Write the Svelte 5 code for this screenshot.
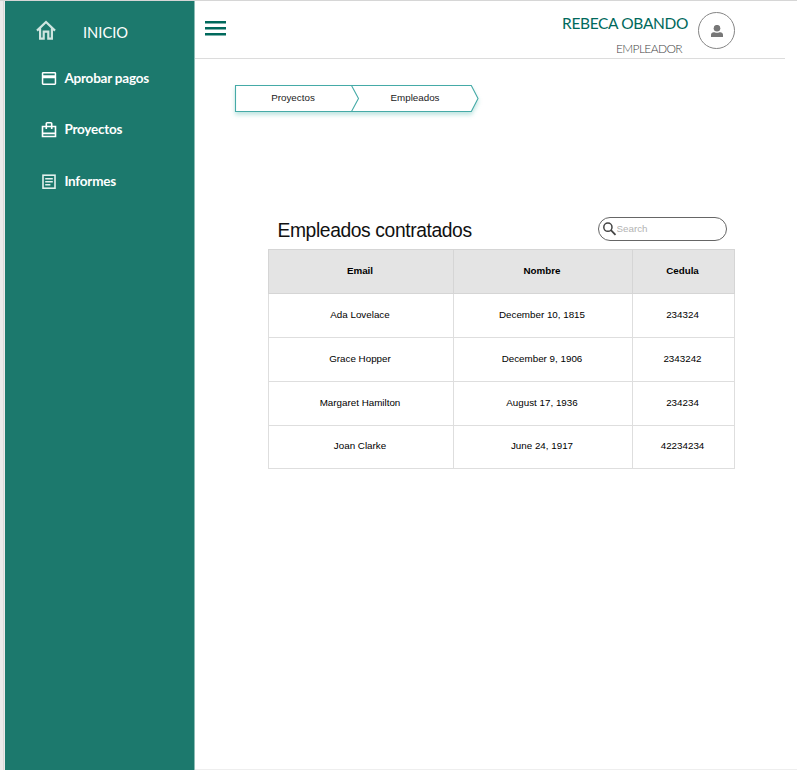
<script>
  const rows = [
    ['Ada Lovelace', 'December 10, 1815', '234324'],
    ['Grace Hopper', 'December 9, 1906', '2343242'],
    ['Margaret Hamilton', 'August 17, 1936', '234234'],
    ['Joan Clarke', 'June 24, 1917', '42234234'],
  ];
</script>

<div class="page">
  <aside>
    <a class="home" href="#inicio">
      <svg width="20" height="20" viewBox="0 0 20 20" fill="none" stroke="#cfe5e0" stroke-width="2.2">
        <path d="M1 10.6 10 2l9 8.6M4.100 8.500V18.600H7.700V11.600H12.300V18.600H15.900V8.500" />
      </svg>
      <span>INICIO</span>
    </a>
    <nav>
      <a href="#pagos">
        <svg width="16" height="16" viewBox="0 0 16 16">
          <path fill="#fff" fill-rule="evenodd" d="M2.200 2h11.600c.8 0 1.400.6 1.400 1.400v10.200c0 .8-.6 1.400-1.400 1.400H2.200c-.8 0-1.400-.6-1.400-1.400V3.400c0-.8.6-1.400 1.400-1.400ZM2.300 3.500v1.700h11.400V3.500ZM2.300 8.200v5.300h11.400V8.200Z" />
        </svg>
        <span>Aprobar pagos</span>
      </a>
      <a href="#proyectos">
        <svg width="16" height="16" viewBox="0 0 16 16" fill="none" stroke="#fff" stroke-width="1.600">
          <path d="M1.500 4.500h13v10h-13ZM5.300 7V1.500Q5.300.8 6.100.8H9.900Q10.700.8 10.700 1.500V7M1.500 11.400h13" />
        </svg>
        <span>Proyectos</span>
      </a>
      <a href="#informes">
        <svg width="16" height="16" viewBox="0 0 16 16" fill="none" stroke="#e2f0ed" stroke-width="1.600">
          <rect x="2" y="2.200" width="12" height="13" />
          <path d="M4.200 5.700h7.600M4.200 8.700h7.600M4.200 11.700h5.200" />
        </svg>
        <span>Informes</span>
      </a>
    </nav>
  </aside>

  <div class="body">
    <header>
      <button class="menu" aria-label="Menu">
        <svg width="21" height="16" viewBox="0 0 21 16" fill="#00695c">
          <path d="M0 0h21v2.500H0ZM0 6h21v2.500H0ZM0 12h21v2.500H0Z" />
        </svg>
      </button>
      <div class="user">
        <div class="name">REBECA OBANDO</div>
        <div class="role">EMPLEADOR</div>
      </div>
      <div class="avatar">
        <svg width="12" height="12" viewBox="0 0 12 12" fill="#777">
          <circle cx="6" cy="3.200" r="3.300" />
          <path d="M0 12v-2.300C0 8.200 1.200 7.200 2.700 7.200c1 0 1.700.5 3.300.5s2.300-.5 3.300-.5C10.800 7.200 12 8.200 12 9.700V12Z" />
        </svg>
      </div>
    </header>

    <main>
      <div class="crumbs">
        <svg width="250" height="36" viewBox="0 0 250 36" fill="#fff" stroke="#45aaa7" stroke-width="1.100">
          <path d="M3.500 3.500H239.300L246 16.500 239.300 29.500H3.500Z" />
          <path fill="none" d="M119.500 3.500 126.500 16.500 119.500 29.500" />
        </svg>
        <span>Proyectos</span>
        <span>Empleados</span>
      </div>

      <section>
        <div class="top">
          <h1>Empleados contratados</h1>
          <label class="search">
            <svg width="14" height="14" viewBox="0 0 14 14" fill="none" stroke="#444">
              <circle cx="4.900" cy="5.200" r="4.100" stroke-width="1.500" />
              <path d="m7.900 8.200 4.600 4.600" stroke-width="1.800" />
            </svg>
            <input type="text" placeholder="Search" />
          </label>
        </div>
        <table>
          <colgroup><col class="c1" /><col class="c2" /><col class="c3" /></colgroup>
          <thead>
            <tr><th>Email</th><th>Nombre</th><th>Cedula</th></tr>
          </thead>
          <tbody>
            {#each rows as row}
              <tr>{#each row as cell}<td>{cell}</td>{/each}</tr>
            {/each}
          </tbody>
        </table>
      </section>
    </main>
  </div>
</div>

<style>
  :global(body) { margin: 0; background: #fff; }
  * { box-sizing: border-box; }
  .page {
    display: flex;
    height: 770px;
    overflow: hidden;
    border-top: 1px solid #d6d6d6;
    font-family: "Liberation Sans", Arial, sans-serif;
  }
  aside {
    width: 195px;
    flex: none;
    padding-left: 5px;
    border-right: 1px solid #8dbcb5;
    background: linear-gradient(to right, #ebebeb 3px, #d9d9d9 3px 4px, #ebebeb 4px 5px, #1c796d 5px);
    font-family: Lato, sans-serif;
  }
  a { display: flex; align-items: center; color: #fff; text-decoration: none; }
  .home { height: 60px; padding-left: 31px; font-size: 14.700px; }
  .home span { margin: 2px 0 1px 27px; }
  .home svg { margin-bottom: 2px; }
  nav { padding: 6px 0 0 36px; }
  nav a { height: 22px; margin-bottom: 29.500px; font-size: 13.500px; font-weight: 700; letter-spacing: -0.220px; }
  nav span { margin-left: 7.400px; }
  nav a:nth-child(2) span { margin-top: -2px; }
  .body { flex: 1; border-bottom: 1px solid #eee; }
  header {
    display: flex;
    width: 590px;
    height: 58px;
    border-bottom: 1px solid #dcdcdc;
    font-family: Lato, sans-serif;
  }
  .menu {
    display: flex;
    width: 21px;
    height: 16px;
    margin: 20px 0 0 10px;
    padding: 0;
    border: 0;
    background: none;
  }
  .user { margin-left: auto; text-align: right; white-space: nowrap; }
  .name { height: 20px; margin-top: 12px; line-height: 20px; font-size: 15.500px; letter-spacing: -0.350px; color: #00695c; }
  .role { height: 16px; margin: 8px 6px 0 0; line-height: 16px; font-size: 12px; letter-spacing: -0.620px; font-weight: 300; color: #444; }
  .avatar {
    display: flex;
    align-items: center;
    justify-content: center;
    width: 37px;
    height: 37px;
    margin: 11px 50px 0 10px;
    border: 1px solid #858585;
    border-radius: 50%;
  }
  main { padding-top: 23px; }
  .crumbs {
    position: relative;
    display: flex;
    width: 250px;
    height: 36px;
    margin-left: 37px;
    font-size: 9.800px;
    color: #222;
  }
  .crumbs svg { position: absolute; top: 0; left: 0; filter: drop-shadow(0 3px 2px rgba(0, 150, 136, 0.250)); }
  .crumbs span { position: relative; width: 122px; line-height: 32px; text-align: center; }
  section { width: 466px; margin: 98px 0 0 72.500px; }
  .top { display: flex; justify-content: space-between; height: 33px; padding: 1px 7px 0 10px; }
  h1 { margin: 0; font-size: 19.300px; font-weight: 400; letter-spacing: -0.400px; line-height: 28px; color: #111; }
  .search {
    display: flex;
    align-items: center;
    width: 129px;
    height: 24px;
    padding-left: 4px;
    border: 1px solid #666;
    border-radius: 12px;
  }
  .search input {
    width: 95px;
    padding: 0 0 1px;
    border: 0;
    outline: 0;
    background: none;
    font: 9.800px "Liberation Sans", Arial, sans-serif;
  }
  .search input::placeholder { color: #b3b3b3; }
  table { width: 466px; table-layout: fixed; border-collapse: collapse; font-size: 9.800px; text-align: center; color: #000; }
  .c1 { width: 185px; }
  .c2 { width: 179px; }
  .c3 { width: 102px; }
  th, td { height: 44px; padding: 0 1px 3px 0; border: 1px solid #dedede; }
  th { background: #e4e4e4; border-color: #d5d5d5; font-weight: 700; }
  tbody tr:nth-child(4) td { height: 43px; }
</style>
